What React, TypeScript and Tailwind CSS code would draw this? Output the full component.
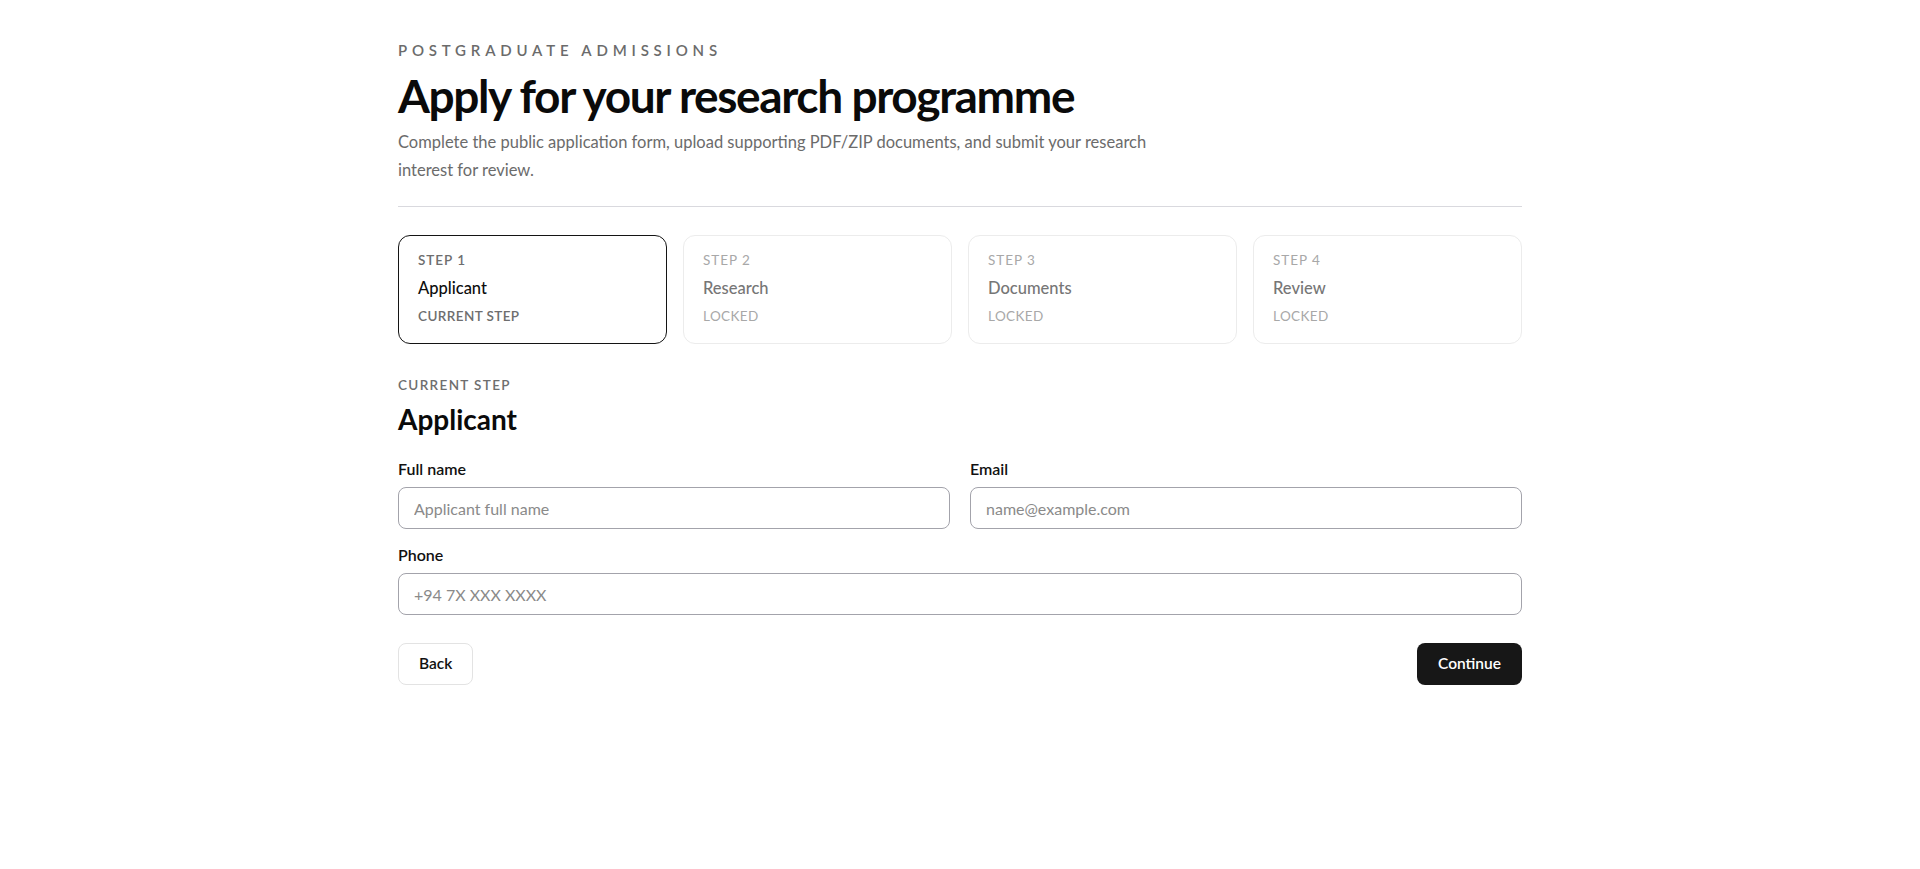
import { useState } from "react";

const steps = [
  { id: 1, title: "Applicant" },
  { id: 2, title: "Research" },
  { id: 3, title: "Documents" },
  { id: 4, title: "Review" },
];

const StepCard = ({
  id,
  title,
  active,
}: {
  id: number;
  title: string;
  active: boolean;
}) => (
  <div
    className={
      active
        ? "rounded-xl border border-[#141414] bg-white px-[19px] pt-4 pb-[19px]"
        : "rounded-xl border border-[#ececec] bg-white px-[19px] pt-4 pb-[19px]"
    }
  >
    <p
      className={
        active
          ? "text-[13.5px] leading-4 font-semibold tracking-[0.07em] text-[#6e6e6e]"
          : "text-[13.5px] leading-4 tracking-[0.07em] text-[#a8a8a8]"
      }
    >
      STEP {id}
    </p>
    <p
      className={
        active
          ? "mt-2 text-[16.5px] leading-6 font-medium text-[#0d0d0d]"
          : "mt-2 text-[16.5px] leading-6 font-medium text-[#767676]"
      }
    >
      {title}
    </p>
    <p
      className={
        active
          ? "mt-2 text-[13.5px] leading-4 font-semibold tracking-[0.03em] text-[#6e6e6e]"
          : "mt-2 text-[13.5px] leading-4 tracking-[0.03em] text-[#a8a8a8]"
      }
    >
      {active ? "CURRENT STEP" : "LOCKED"}
    </p>
  </div>
);

const Field = ({
  label,
  placeholder,
  type = "text",
}: {
  label: string;
  placeholder: string;
  type?: string;
}) => (
  <label className="flex flex-col">
    <span className="text-base leading-5 font-semibold text-[#111]">
      {label}
    </span>
    <input
      type={type}
      placeholder={placeholder}
      className="mt-2 h-[42px] w-full rounded-lg border border-[#a3a3ab] bg-white px-[15px] text-base text-[#111] outline-none placeholder:text-[#8a8a8a]"
    />
  </label>
);

export default function App() {
  const [current] = useState(1);

  return (
    <div
      className="min-h-screen bg-white"
      style={{ fontFamily: "Lato, 'Noto Sans', sans-serif" }}
    >
      <main className="mx-auto max-w-[1124px] pt-10 pb-20">
        <header className="border-b border-[#d9d9de] pb-[22px]">
          <p className="text-[15px] leading-5 font-semibold tracking-[0.32em] text-[#6b6b6b]">
            POSTGRADUATE ADMISSIONS
          </p>
          <h1 className="mt-2 text-[46px] leading-[56px] font-bold tracking-[-0.03em] text-[#0a0a0a]">
            Apply for your research programme
          </h1>
          <p className="mt-1 max-w-3xl text-[16.5px] leading-7 text-[#6b6b6b]">
            Complete the public application form, upload supporting PDF/ZIP
            documents, and submit your research interest for review.
          </p>
        </header>

        <div className="mt-7 grid grid-cols-4 gap-4">
          {steps.map((s) => (
            <StepCard
              key={s.id}
              id={s.id}
              title={s.title}
              active={s.id === current}
            />
          ))}
        </div>

        <section className="mt-[33px]">
          <p className="text-[13.5px] leading-4 font-semibold tracking-[0.1em] text-[#6e6e6e]">
            CURRENT STEP
          </p>
          <h2 className="mt-2 text-[28px] leading-9 font-bold text-[#0a0a0a]">
            Applicant
          </h2>

          <div className="mt-[22px] grid grid-cols-2 gap-x-5 gap-y-4">
            <Field label="Full name" placeholder="Applicant full name" />
            <Field label="Email" placeholder="name@example.com" type="email" />
            <div className="col-span-2">
              <Field label="Phone" placeholder="+94 7X XXX XXXX" type="tel" />
            </div>
          </div>

          <div className="mt-7 flex items-center justify-between">
            <button className="h-[42px] rounded-lg border border-[#e3e3e3] bg-white px-5 text-[15.5px] font-semibold text-[#111]">
              Back
            </button>
            <button className="h-[42px] rounded-lg bg-[#171717] px-[21px] text-[15.5px] font-semibold text-white">
              Continue
            </button>
          </div>
        </section>
      </main>
    </div>
  );
}
